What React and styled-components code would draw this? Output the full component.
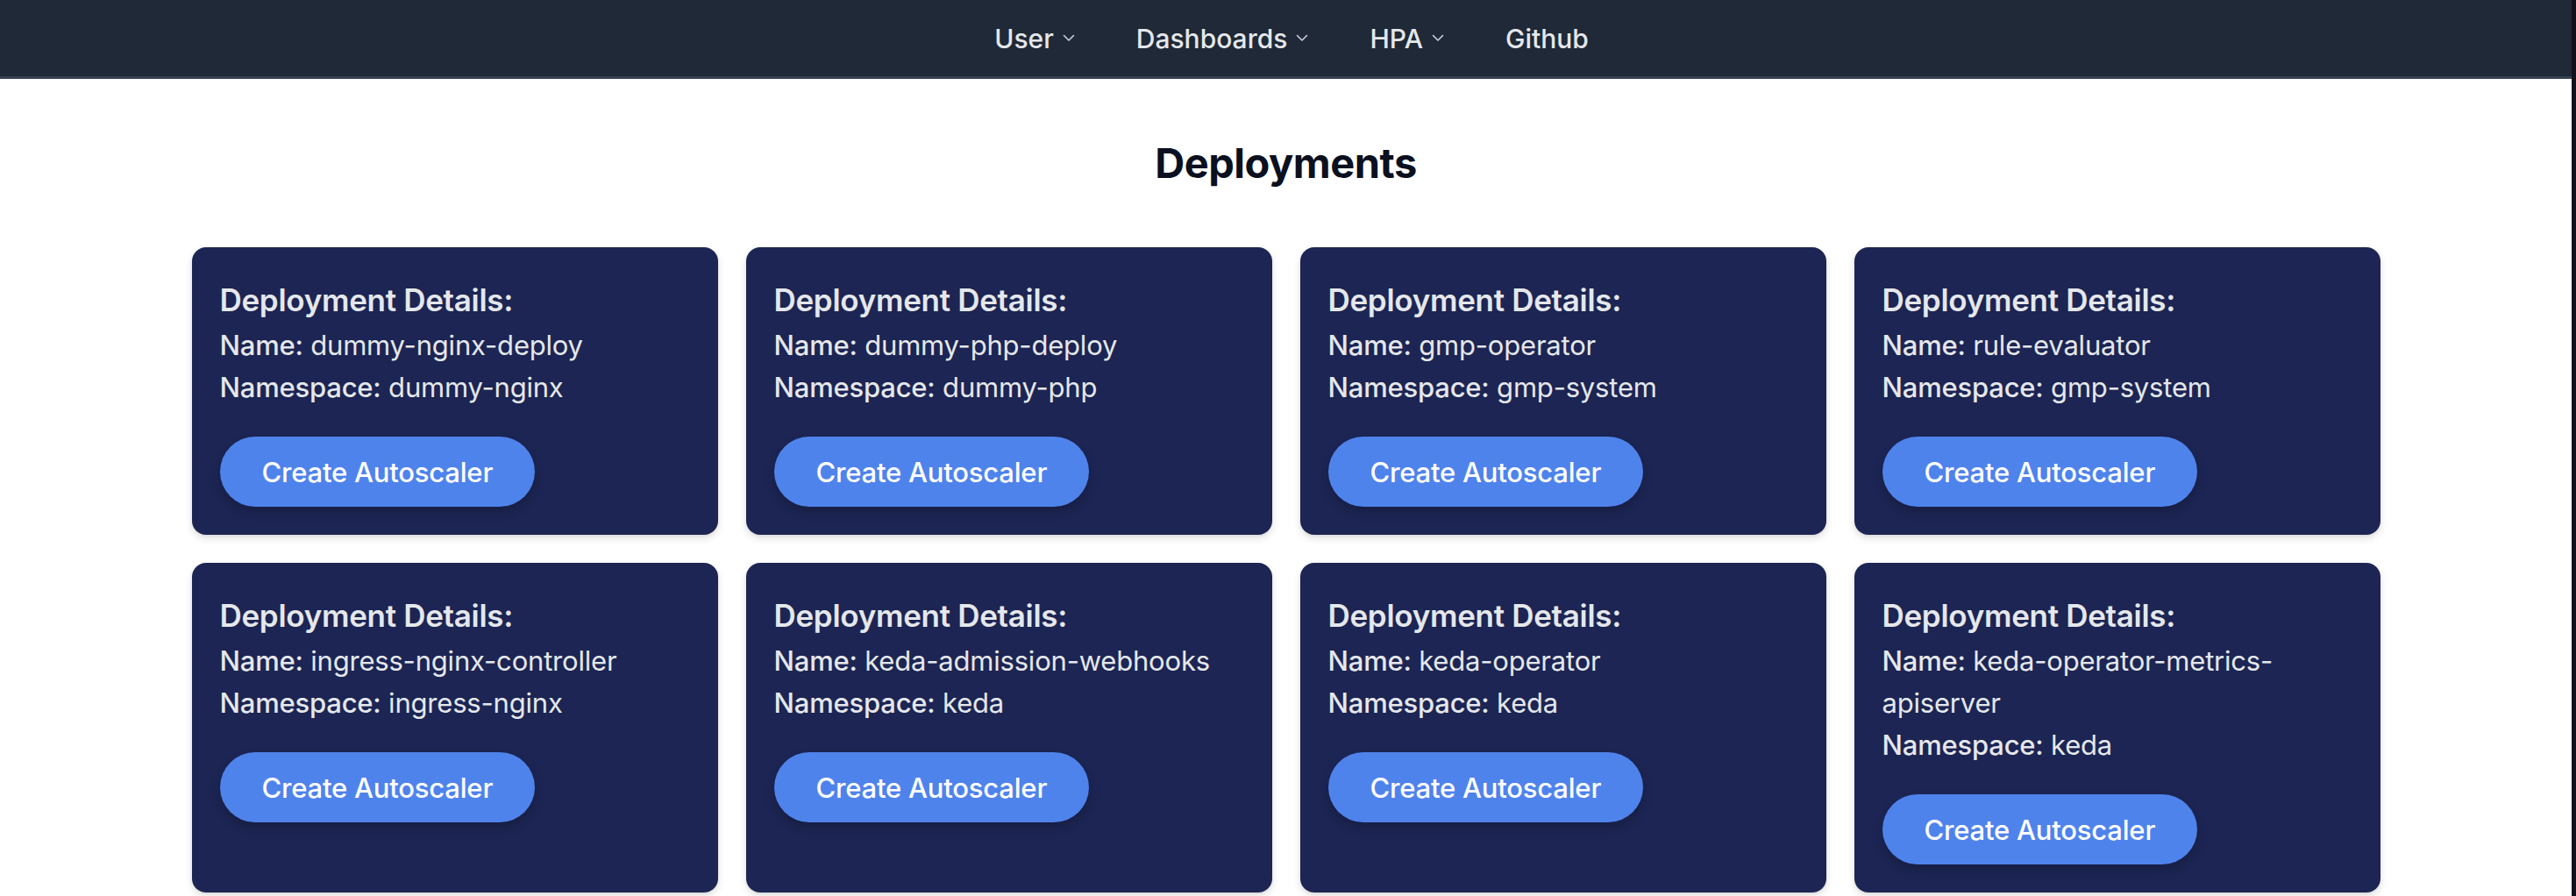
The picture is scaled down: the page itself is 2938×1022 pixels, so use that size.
import React from 'react';
import styled, {createGlobalStyle} from 'styled-components';

const GlobalStyle = createGlobalStyle`
    html, body {
        margin: 0;
        padding: 0;
    }

    body {
        background: #12111c;
        font-family: Inter, "Noto Sans", "Liberation Sans", sans-serif;
    }

    #root {
        margin-right: 5px;
        min-height: 1022px;
        background: #ffffff;
    }
`;

const NavBar = styled.nav`
    height: 87px;
    padding-left: 13px;
    background: #1f2937;
    border-bottom: 3px solid #374151;
    display: flex;
    align-items: center;
    justify-content: center;
    gap: 70px;
`;

const NavItem = styled.a`
    display: flex;
    align-items: center;
    gap: 10px;
    color: #e5e7eb;
    font-size: 30px;
    font-weight: 500;
    text-decoration: none;
    cursor: pointer;
`;

const Chevron = () => (
    <svg width="14" height="9" viewBox="0 0 14 9" fill="none">
        <path d="M1.5 1.5 L7 7 L12.5 1.5" stroke="#cbd0d8" strokeWidth="1.6" strokeLinecap="round" strokeLinejoin="round"/>
    </svg>
);

const Main = styled.main`
    max-width: 2560px;
    margin: 0 auto;
    padding: 0 32px;
    box-sizing: border-box;
`;

const Title = styled.h1`
    margin: 64px 0 64px;
    text-align: center;
    font-size: 47px;
    line-height: 64px;
    font-weight: 700;
    letter-spacing: -0.5px;
    color: #0b1020;
`;

const Grid = styled.div`
    display: grid;
    grid-template-columns: repeat(4, 1fr);
    gap: 32px;
`;

const Card = styled.div`
    background: #1c2553;
    border-radius: 16px;
    padding: 32px;
    color: #e5e7eb;
    box-shadow: 0 4px 10px rgba(0, 0, 0, 0.12), 0 1px 3px rgba(0, 0, 0, 0.08);
`;

const CardTitle = styled.h3`
    margin: 0;
    font-size: 35px;
    line-height: 56px;
    font-weight: 600;
    letter-spacing: -0.3px;
`;

const InfoLine = styled.p`
    margin: 0;
    font-size: 31px;
    line-height: 48px;
    font-weight: 400;
    letter-spacing: -0.2px;
    overflow-wrap: break-word;

    strong {
        font-weight: 500;
    }
`;

const CreateBtn = styled.button`
    margin-top: 32px;
    height: 80px;
    padding: 0 48px;
    border: none;
    border-radius: 9999px;
    background: #4f83ec;
    color: #ffffff;
    font-family: inherit;
    font-size: 31px;
    font-weight: 500;
    letter-spacing: -0.2px;
    box-shadow: 0 6px 12px rgba(0, 0, 0, 0.18);
    cursor: pointer;
`;

const deployments = [
    {name: 'dummy-nginx-deploy', namespace: 'dummy-nginx'},
    {name: 'dummy-php-deploy', namespace: 'dummy-php'},
    {name: 'gmp-operator', namespace: 'gmp-system'},
    {name: 'rule-evaluator', namespace: 'gmp-system'},
    {name: 'ingress-nginx-controller', namespace: 'ingress-nginx'},
    {name: 'keda-admission-webhooks', namespace: 'keda'},
    {name: 'keda-operator', namespace: 'keda'},
    {name: 'keda-operator-metrics-apiserver', namespace: 'keda'},
];

const navLinks = [
    {label: 'User', menu: true},
    {label: 'Dashboards', menu: true},
    {label: 'HPA', menu: true},
    {label: 'Github', menu: false},
];

export default function App() {
    return (
        <>
            <GlobalStyle/>
            <NavBar>
                {navLinks.map(link => (
                    <NavItem key={link.label}>
                        {link.label}
                        {link.menu && <Chevron/>}
                    </NavItem>
                ))}
            </NavBar>
            <Main>
                <Title>Deployments</Title>
                <Grid>
                    {deployments.map(d => (
                        <Card key={d.name}>
                            <CardTitle>Deployment Details:</CardTitle>
                            <InfoLine><strong>Name:</strong> {d.name}</InfoLine>
                            <InfoLine><strong>Namespace:</strong> {d.namespace}</InfoLine>
                            <CreateBtn>Create Autoscaler</CreateBtn>
                        </Card>
                    ))}
                </Grid>
            </Main>
        </>
    );
}
